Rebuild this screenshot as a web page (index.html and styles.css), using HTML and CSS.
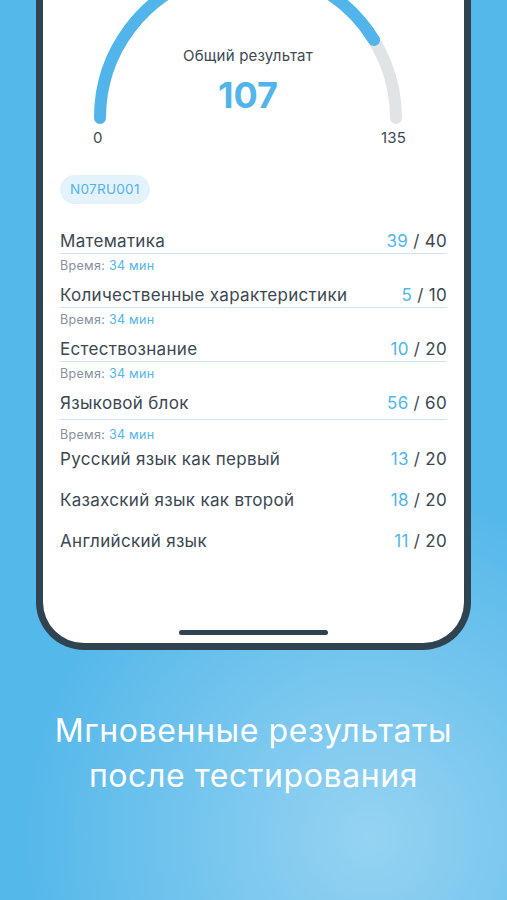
FILE: index.html
```html
<!DOCTYPE html>
<html lang="ru">
<head>
    <meta charset="UTF-8">
    <meta name="viewport" content="width=device-width, initial-scale=1.0">
    <title>Результаты</title>
    <link rel="stylesheet" href="styles.css">
</head>
<body>
    <div class="phone">
        <div class="screen">
            <div class="gauge">
                <svg class="gauge-arc" width="410" height="150" viewBox="0 0 410 150">
                    <path d="M57 118 A148 148 0 0 1 353 118" fill="none" stroke="#e1e4e7" stroke-width="12" stroke-linecap="round"/>
                    <path d="M57 118 A148 148 0 0 1 331 40" fill="none" stroke="#51b5eb" stroke-width="12" stroke-linecap="round"/>
                </svg>
                <div class="gauge-title">Общий результат</div>
                <div class="gauge-value">107</div>
                <div class="gauge-limits">
                    <span>0</span>
                    <span>135</span>
                </div>
            </div>

            <div class="results">
                <span class="code">N07RU001</span>

                <div class="subject">
                    <div class="subject-head">
                        <span>Математика</span>
                        <span class="score"><b>39</b> / 40</span>
                    </div>
                    <div class="time">Время: <b>34 мин</b></div>
                </div>
                <div class="subject">
                    <div class="subject-head">
                        <span>Количественные характеристики</span>
                        <span class="score"><b>5</b> / 10</span>
                    </div>
                    <div class="time">Время: <b>34 мин</b></div>
                </div>
                <div class="subject">
                    <div class="subject-head">
                        <span>Естествознание</span>
                        <span class="score"><b>10</b> / 20</span>
                    </div>
                    <div class="time">Время: <b>34 мин</b></div>
                </div>
                <div class="subject subject-lang">
                    <div class="subject-head">
                        <span>Языковой блок</span>
                        <span class="score"><b>56</b> / 60</span>
                    </div>
                    <div class="time">Время: <b>34 мин</b></div>
                </div>

                <div class="part">
                    <span>Русский язык как первый</span>
                    <span class="score"><b>13</b> / 20</span>
                </div>
                <div class="part">
                    <span>Казахский язык как второй</span>
                    <span class="score"><b>18</b> / 20</span>
                </div>
                <div class="part">
                    <span>Английский язык</span>
                    <span class="score"><b>11</b> / 20</span>
                </div>
            </div>

            <div class="home-bar"></div>
        </div>
    </div>

    <h1 class="caption">Мгновенные результаты<br>после тестирования</h1>
</body>
</html>
```

FILE: styles.css
```css
body {
    margin: 0;
    height: 900px;
    overflow: hidden;
    font-family: Inter, "Noto Sans", sans-serif;
    background: radial-gradient(circle at 73% 93%, rgba(255, 255, 255, 0.38), rgba(255, 255, 255, 0) 38%), #55b8ea;
}
.phone {
    margin-left: 36px;
    width: 421px;
    border: 7px solid #2f4351;
    border-top: none;
    border-radius: 0 0 48px 48px;
    background: #fff;
    overflow: hidden;
}
.screen {
    height: 643px;
    display: flex;
    flex-direction: column;
}
.gauge {
    position: relative;
    width: 410px;
    height: 175px;
    text-align: center;
}
.gauge-arc {
    position: absolute;
    left: 0;
    top: 0;
}
.gauge-title {
    padding-top: 47px;
    font-size: 15px;
    line-height: 18px;
    letter-spacing: 0.2px;
    color: #3c4853;
}
.gauge-value {
    margin-top: 10px;
    font-size: 36px;
    line-height: 40px;
    font-weight: 700;
    color: #51b5eb;
}
.gauge-limits {
    display: flex;
    justify-content: space-between;
    margin-top: 14px;
    padding: 0 47px 0 50px;
    font-size: 15px;
    line-height: 18px;
    letter-spacing: 0.2px;
    color: #3c4853;
}
.results {
    padding: 0 17px;
    color: #3b4752;
}
.code {
    display: inline-block;
    height: 29px;
    line-height: 29px;
    padding: 0 10px;
    border-radius: 15px;
    background: #e4f2fc;
    color: #51b5eb;
    font-size: 13.5px;
    letter-spacing: 0.3px;
    margin-bottom: 26px;
}
.subject-head, .part {
    display: flex;
    justify-content: space-between;
    font-size: 17px;
    line-height: 23px;
    letter-spacing: 0.3px;
}
.subject-head {
    border-bottom: 1px solid #cfe5f4;
}
.score b, .time b {
    font-weight: 400;
    color: #51b5eb;
}
.score {
    color: #3b4752;
}
.time {
    margin: 4px 0 10px;
    font-size: 12.5px;
    line-height: 16px;
    letter-spacing: 0.3px;
    color: #85929e;
}
.subject-lang .subject-head {
    padding-bottom: 4px;
}
.subject-lang .time {
    margin: 7px 0 4px;
}
.part {
    line-height: 24px;
    margin-bottom: 17px;
}
.home-bar {
    margin: auto auto 8px;
    width: 149px;
    height: 5px;
    border-radius: 3px;
    background: #2f4351;
}
.caption {
    margin: 58px 0 0;
    text-align: center;
    color: #fff;
    font-size: 32px;
    line-height: 45px;
    letter-spacing: 0.6px;
    font-weight: 400;
}
```
